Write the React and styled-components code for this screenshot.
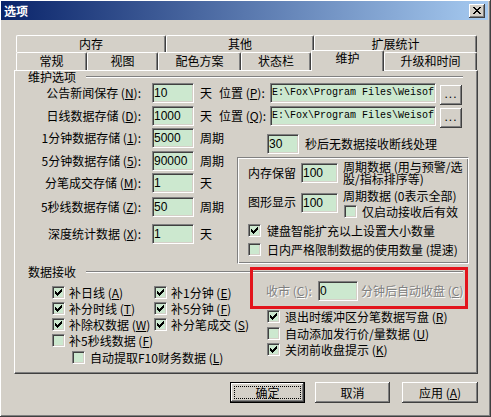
import styled, { createGlobalStyle, css } from "styled-components";

const GlobalStyle = createGlobalStyle`
  html, body {
    margin: 0;
    padding: 0;
    background: #d4d0c8;
  }
  body {
    font-family: "Noto Sans CJK SC", "Liberation Sans", sans-serif;
    font-size: 12px;
    color: #000;
  }
  * { box-sizing: border-box; }
`;

const raised = css`
  background: #d4d0c8;
  box-shadow: inset -1px -1px #404040, inset 1px 1px #fff, inset -2px -2px #808080;
`;

const sunken = css`
  background: #cce8cf;
  border-style: solid;
  border-width: 1px;
  border-color: #808080 #fff #fff #808080;
  box-shadow: inset 1px 1px #404040, inset -1px -1px #d4d0c8;
`;

const Window = styled.div`
  width: 491px;
  height: 417px;
  padding: 1px 3px 3px 1px;
  display: flex;
  flex-direction: column;
  ${raised}
`;

const TitleBar = styled.div`
  height: 19px;
  flex: none;
  display: flex;
  align-items: center;
  justify-content: space-between;
  padding: 0 3px 0 3px;
  background: linear-gradient(to right, #0a246a, #a6caf0);
`;

const Title = styled.span`
  color: #fff;
  font-weight: bold;
  line-height: 12px;
`;

const CloseButton = styled.div`
  width: 16px;
  height: 14px;
  display: flex;
  align-items: center;
  justify-content: center;
  ${raised}
`;

const Body = styled.div`
  flex: 1;
  display: flex;
  flex-direction: column;
  padding: 15px 10px 0 13px;
`;

const TabRow = styled.div`
  display: flex;
  height: ${(p) => p.$h}px;
  padding: 0 1px 0 2px;
`;

const Tab = styled.div`
  width: ${(p) => p.$w}px;
  height: ${(p) => p.$h}px;
  flex: none;
  display: flex;
  justify-content: center;
  padding-top: ${(p) => p.$pt}px;
  line-height: 12px;
  background: #d4d0c8;
  border-top: 1px solid #fff;
  border-left: 1px solid #fff;
  border-right: 1px solid #404040;
  border-radius: 2px 2px 0 0;
  box-shadow: inset -1px 0 #808080;
  ${(p) =>
    p.$active &&
    css`
      position: relative;
      z-index: 1;
      margin-top: -2px;
    `}
`;

const Page = styled.div`
  height: 304px;
  display: flex;
  flex-direction: column;
  border-top: 1px solid #fff;
  border-left: 1px solid #fff;
  border-right: 1px solid #404040;
  border-bottom: 1px solid #404040;
  box-shadow: inset -1px -1px #808080;
`;

const Legend = styled.div`
  display: flex;
  align-items: flex-start;
  height: 12px;
  margin-top: ${(p) => p.$mt || 0}px;
  padding: 0 14px 0 13px;
  line-height: 12px;
`;

const LegendLine = styled.div`
  flex: 1;
  height: 2px;
  margin: 5px 0 0 10px;
  border-top: 1px solid #808080;
  border-bottom: 1px solid #fff;
`;

const FormRow = styled.div`
  display: flex;
  align-items: center;
  height: 20px;
  margin-top: ${(p) => p.$mt || 0}px;
  line-height: 12px;
  white-space: nowrap;
`;

const FieldLabel = styled.span`
  width: ${(p) => p.$w || 126}px;
  flex: none;
  text-align: ${(p) => p.$align || "right"};
  padding-left: ${(p) => p.$pl || 0}px;
  ${(p) =>
    p.$disabled &&
    css`
      color: #808080;
      text-shadow: 1px 1px 0 #fff;
    `}
`;

const Field = styled.div`
  width: ${(p) => p.$w}px;
  height: 20px;
  flex: none;
  margin-left: ${(p) => p.$ml || 0}px;
  margin-top: ${(p) => p.$mt || 0}px;
  padding-left: 1px;
  display: flex;
  align-items: center;
  overflow: hidden;
  white-space: nowrap;
  font-family: ${(p) => (p.$mono ? '"Liberation Mono", monospace' : '"Liberation Sans", sans-serif')};
  font-size: ${(p) => (p.$mono ? 10 : 12)}px;
  ${sunken}
`;

const Unit = styled.span`
  flex: none;
  width: ${(p) => (p.$w ? `${p.$w}px` : "auto")};
  margin-left: ${(p) => p.$ml || 0}px;
  margin-top: ${(p) => p.$mt || 0}px;
  line-height: 12px;
  white-space: nowrap;
  ${(p) =>
    p.$disabled &&
    css`
      color: #808080;
      text-shadow: 1px 1px 0 #fff;
    `}
`;

const Browse = styled.div`
  width: 22px;
  height: 20px;
  flex: none;
  align-self: flex-start;
  margin: 2px 0 0 4px;
  display: flex;
  justify-content: center;
  align-items: center;
  font-family: "Liberation Sans", sans-serif;
  letter-spacing: 1px;
  padding-bottom: 3px;
  ${raised}
`;

const Lower = styled.div`
  display: flex;
  margin-top: ${(p) => p.$mt || 0}px;
`;

const Column = styled.div`
  display: flex;
  flex-direction: column;
  width: ${(p) => (p.$w ? `${p.$w}px` : "auto")};
  flex: ${(p) => (p.$w ? "none" : 1)};
  padding-left: ${(p) => p.$pl || 0}px;
  padding-top: ${(p) => p.$pt || 0}px;
`;

const InnerBox = styled.div`
  width: 232px;
  height: 107px;
  margin-top: 3px;
  padding-left: 10px;
  display: flex;
  flex-direction: column;
  border: 1px solid;
  border-color: #808080 #fff #fff #808080;
  box-shadow: inset 1px 1px #fff, inset -1px -1px #808080;
`;

const BoxRow = styled.div`
  display: flex;
  align-items: ${(p) => p.$align || "center"};
  height: ${(p) => p.$h || 20}px;
  margin-top: ${(p) => p.$mt || 0}px;
  line-height: 12px;
  white-space: nowrap;
`;

const Stack = styled.div`
  display: flex;
  flex-direction: column;
  margin-left: ${(p) => p.$ml || 0}px;
  line-height: 12px;
  white-space: nowrap;
`;

const Wrapped = styled.span`
  width: ${(p) => p.$w}px;
  margin-left: ${(p) => p.$ml || 0}px;
  line-height: 12px;
  white-space: normal;
`;

const CheckRow = styled.div`
  display: flex;
  align-items: center;
  height: 13px;
  gap: ${(p) => p.$gap ?? 4}px;
  margin-top: ${(p) => p.$mt || 0}px;
  margin-left: ${(p) => p.$ml || 0}px;
  line-height: 12px;
  white-space: nowrap;
`;

const Box = styled.span`
  width: 13px;
  height: 13px;
  flex: none;
  display: flex;
  align-items: center;
  justify-content: center;
  ${sunken}
`;

const CheckGrid = styled.div`
  display: grid;
  grid-template-columns: 102px auto;
  grid-auto-rows: 13px;
  row-gap: 3px;
  margin-top: 8px;
  padding-left: 37px;
`;

const DataSection = styled.div`
  position: relative;
  margin-top: 2px;
`;

const Highlight = styled.div`
  position: absolute;
  left: 235px;
  top: 1px;
  width: 218px;
  height: 42px;
  border: 3px solid #e3141c;
  pointer-events: none;
`;

const ButtonBar = styled.div`
  display: flex;
  justify-content: flex-end;
  margin-top: 8px;
`;

const Button = styled.div`
  width: ${(p) => p.$w}px;
  height: 21px;
  margin-left: ${(p) => p.$ml || 0}px;
  display: flex;
  align-items: center;
  justify-content: center;
  line-height: 12px;
  ${raised}
  ${(p) =>
    p.$default &&
    css`
      border: 1px solid #000;
      outline: 1px dotted #000;
      outline-offset: -5px;
    `}
`;

const Key = styled.u`
  text-underline-offset: 1px;
`;

const CheckMark = () => (
  <svg width="7" height="7" viewBox="0 0 7 7">
    <path d="M0 2H1V3H2V4H3V3H4V2H5V1H6V0H7V3H6V4H5V5H4V6H3V7H2V6H1V5H0Z" fill="#000" />
  </svg>
);

const closeRows = [
  [[0, 2], [6, 2]],
  [[1, 2], [5, 2]],
  [[2, 4]],
  [[3, 2]],
  [[2, 4]],
  [[1, 2], [5, 2]],
  [[0, 2], [6, 2]],
];

const CloseGlyph = () => (
  <svg width="8" height="7" viewBox="0 0 8 7">
    {closeRows.map((row, y) =>
      row.map(([x, w]) => <rect key={`${y}-${x}`} x={x} y={y} width={w} height={1} fill="#000" />)
    )}
  </svg>
);

function Check({ checked, gap, mt, ml, children }) {
  return (
    <CheckRow $gap={gap} $mt={mt} $ml={ml}>
      <Box>{checked && <CheckMark />}</Box>
      <span>{children}</span>
    </CheckRow>
  );
}

const backTabs = [
  ["内存", 150],
  ["其他", 148],
  ["扩展统计", 163],
];

const frontTabs = [
  ["常规", 71],
  ["视图", 71],
  ["配色方案", 83],
  ["状态栏", 70],
  ["维护", 73, true],
  ["升级和时间", 93],
];

const storeRows = [
  { label: "1分钟数据存储", key: "1", value: "5000", unit: "周期", mt: 0 },
  { label: "5分钟数据存储", key: "5", value: "90000", unit: "周期", mt: 3 },
  { label: "分笔成交存储", key: "M", value: "1", unit: "天", mt: 2 },
  { label: "5秒线数据存储", key: "Z", value: "50", unit: "周期", mt: 4 },
  { label: "深度统计数据", key: "X", value: "1", unit: "天", mt: 7 },
];

const fillChecks = [
  ["补日线", "A", true],
  ["补1分钟", "E", true],
  ["补分时线", "T", true],
  ["补5分钟", "F", true],
  ["补除权数据", "W", true],
  ["补分笔成交", "S", true],
  ["补5秒线数据", "F", false],
];

// the path box only shows what fits, as in the original dialog
const PATH = "E:\\Fox\\Program Files\\Weisof";

export default function App() {
  return (
    <>
      <GlobalStyle />
      <Window>
        <TitleBar>
          <Title>选项</Title>
          <CloseButton>
            <CloseGlyph />
          </CloseButton>
        </TitleBar>
        <Body>
          <TabRow $h={17}>
            {backTabs.map(([t, w]) => (
              <Tab key={t} $w={w} $h={17} $pt={2}>
                {t}
              </Tab>
            ))}
          </TabRow>
          <TabRow $h={18}>
            {frontTabs.map(([t, w, active]) => (
              <Tab key={t} $w={w} $h={active ? 21 : 18} $pt={active ? 1 : 2} $active={active}>
                {t}
              </Tab>
            ))}
          </TabRow>
          <Page>
            <Legend>
              <span>维护选项</span>
              <LegendLine />
            </Legend>
            <FormRow>
              <FieldLabel>
                公告新闻保存 (<Key>N</Key>):
              </FieldLabel>
              <Field $w={42} $ml={11}>10</Field>
              <Unit $ml={6} $w={19}>天</Unit>
              <Unit $w={51}>
                位置 (<Key>P</Key>):
              </Unit>
              <Field $w={166} $mono>{PATH}</Field>
              <Browse>...</Browse>
            </FormRow>
            <FormRow $mt={3}>
              <FieldLabel>
                日线数据存储 (<Key>D</Key>):
              </FieldLabel>
              <Field $w={42} $ml={11}>1000</Field>
              <Unit $ml={6} $w={19}>天</Unit>
              <Unit $w={51}>
                位置 (<Key>Q</Key>):
              </Unit>
              <Field $w={166} $mono>{PATH}</Field>
              <Browse>...</Browse>
            </FormRow>
            <Lower $mt={2}>
              <Column $w={222}>
                {storeRows.map((r) => (
                  <FormRow key={r.label} $mt={r.mt}>
                    <FieldLabel>
                      {r.label} (<Key>{r.key}</Key>):
                    </FieldLabel>
                    <Field $w={42} $ml={11}>{r.value}</Field>
                    <Unit $ml={6}>{r.unit}</Unit>
                  </FormRow>
                ))}
              </Column>
              <Column $pt={6}>
                <FormRow>
                  <Field $w={32} $ml={30}>30</Field>
                  <Unit $ml={6}>秒后无数据接收断线处理</Unit>
                </FormRow>
                <InnerBox>
                  <BoxRow $mt={5}>
                    <Unit $w={53}>内存保留</Unit>
                    <Field $w={37}>100</Field>
                    <Wrapped $w={124} $ml={5}>
                      周期数据 (用与预警/选股/指标排序等)
                    </Wrapped>
                  </BoxRow>
                  <BoxRow $mt={7} $h={28} $align="flex-start">
                    <Unit $w={53} $mt={6}>图形显示</Unit>
                    <Field $w={37} $mt={3}>100</Field>
                    <Stack $ml={5}>
                      <span>周期数据 (0表示全部)</span>
                      <Check mt={3} ml={1} gap={5}>
                        仅启动接收后有效
                      </Check>
                    </Stack>
                  </BoxRow>
                  <Check checked mt={6} gap={6}>
                    键盘智能扩充以上设置大小数量
                  </Check>
                  <Check mt={6} gap={6}>
                    日内严格限制数据的使用数量 (提速)
                  </Check>
                </InnerBox>
              </Column>
            </Lower>
            <DataSection>
              <Legend>
                <span>数据接收</span>
                <LegendLine />
              </Legend>
              <Lower>
                <Column $w={235}>
                  <CheckGrid>
                    {fillChecks.map(([t, k, c]) => (
                      <Check key={t} checked={c}>
                        {t} (<Key>{k}</Key>)
                      </Check>
                    ))}
                  </CheckGrid>
                  <Check mt={4} ml={57} gap={5}>
                    自动提取F10财务数据 (<Key>L</Key>)
                  </Check>
                </Column>
                <Column>
                  <FormRow $mt={3}>
                    <FieldLabel $w={68} $pl={16} $align="left" $disabled>
                      收市 (<Key>C</Key>):
                    </FieldLabel>
                    <Field $w={40}>0</Field>
                    <Unit $ml={3} $disabled>
                      分钟后自动收盘 (<Key>C</Key>)
                    </Unit>
                  </FormRow>
                  <Check checked mt={9} ml={17} gap={5}>
                    退出时缓冲区分笔数据写盘 (<Key>R</Key>)
                  </Check>
                  <Check mt={4} ml={17} gap={5}>
                    自动添加发行价/量数据 (<Key>U</Key>)
                  </Check>
                  <Check checked mt={3} ml={17} gap={5}>
                    关闭前收盘提示 (<Key>K</Key>)
                  </Check>
                </Column>
              </Lower>
              <Highlight />
            </DataSection>
          </Page>
          <ButtonBar>
            <Button $w={75} $default>
              确定
            </Button>
            <Button $w={75} $ml={10}>
              取消
            </Button>
            <Button $w={76} $ml={12}>
              应用 (<Key>A</Key>)
            </Button>
          </ButtonBar>
        </Body>
      </Window>
    </>
  );
}
